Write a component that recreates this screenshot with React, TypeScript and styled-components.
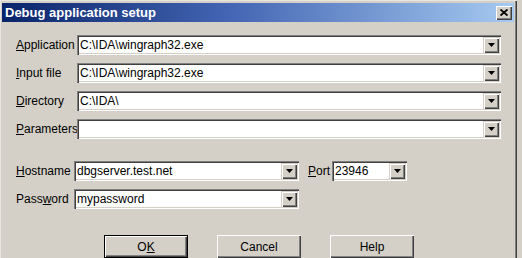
import React from "react";
import styled, { createGlobalStyle } from "styled-components";

const GlobalStyle = createGlobalStyle`
  html, body {
    margin: 0;
    padding: 0;
    background: #d4d0c8;
    overflow: hidden;
  }
  body {
    font-family: "Liberation Sans", Arial, sans-serif;
    font-size: 12px;
    color: #000;
  }
`;

type FieldRow = {
  label: React.ReactNode;
  value: string;
};

const topRows: FieldRow[] = [
  { label: <><u>A</u>pplication</>, value: "C:\\IDA\\wingraph32.exe" },
  { label: <><u>I</u>nput file</>, value: "C:\\IDA\\wingraph32.exe" },
  { label: <><u>D</u>irectory</>, value: "C:\\IDA\\" },
  { label: <><u>P</u>arameters</>, value: "" },
];

const Combo = ({ value, width }: { value: string; width?: number }) => (
  <ComboBox $width={width}>
    <ComboText>{value}</ComboText>
    <DropButton>
      <svg width="7" height="4" viewBox="0 0 7 4">
        <path d="M0 0h7L3.5 4z" fill="#000" />
      </svg>
    </DropButton>
  </ComboBox>
);

export default function App() {
  return (
    <>
      <GlobalStyle />
      <Window>
        <TitleBar>
          <Title>Debug application setup</Title>
          <CloseButton>
            <svg width="8" height="7" viewBox="0 0 8 7">
              <path d="M0.5 0.5L7.5 6.5M7.5 0.5L0.5 6.5" stroke="#000" strokeWidth="1.8" />
            </svg>
          </CloseButton>
        </TitleBar>
        <Content>
          <TopGrid>
            {topRows.map((row, i) => (
              <React.Fragment key={i}>
                <Label>{row.label}</Label>
                <Combo value={row.value} />
              </React.Fragment>
            ))}
          </TopGrid>
          <HostGrid>
            <Label><u>H</u>ostname</Label>
            <Combo value="dbgserver.test.net" width={225} />
            <PortLabel><u>P</u>ort</PortLabel>
            <Combo value="23946" width={75} />
            <Label>Pass<u>w</u>ord</Label>
            <Combo value="mypassword" width={225} />
          </HostGrid>
          <ButtonRow>
            <Button $default>O<u>K</u></Button>
            <Button>Cancel</Button>
            <Button>Help</Button>
          </ButtonRow>
        </Content>
      </Window>
    </>
  );
}

const Window = styled.div`
  width: 517px;
  height: 270px;
  box-sizing: border-box;
  padding: 3px 3px 0 2px;
  background: #d4d0c8;
  box-shadow: inset 1px 1px 0 #e8e6e1, inset -1px -1px 0 #404040,
    inset -2px -2px 0 #808080;
`;

const TitleBar = styled.div`
  height: 19px;
  display: flex;
  align-items: center;
  justify-content: space-between;
  padding: 0 2px 0 3px;
  background: linear-gradient(90deg, #0a246a 0%, #4466b4 45%, #a6caf0 100%);
`;

const Title = styled.div`
  color: #fff;
  font-family: "Liberation Sans", Arial, sans-serif;
  font-weight: bold;
  font-size: 13px;
`;

const CloseButton = styled.div`
  width: 16px;
  height: 14px;
  box-sizing: border-box;
  display: flex;
  align-items: center;
  justify-content: center;
  background: #d4d0c8;
  box-shadow: inset 1px 1px 0 #fff, inset -1px -1px 0 #404040,
    inset -2px -2px 0 #808080;
`;

const Content = styled.div`
  padding: 13px 13px 0 13px;
`;

const TopGrid = styled.div`
  display: grid;
  grid-template-columns: 62px 424px;
  row-gap: 8px;
  align-items: center;
`;

const HostGrid = styled.div`
  display: grid;
  grid-template-columns: 59px 234px 24px 75px;
  justify-content: start;
  row-gap: 8px;
  align-items: center;
  justify-items: start;
  margin-top: 22px;
`;

const Label = styled.div`
  padding-left: 1px;
  white-space: nowrap;
  line-height: 14px;
`;

const PortLabel = styled(Label)`
  padding-left: 0;
`;

const ComboBox = styled.div<{ $width?: number }>`
  width: ${(p) => (p.$width ? `${p.$width}px` : "424px")};
  height: 20px;
  box-sizing: border-box;
  display: flex;
  align-items: stretch;
  background: #fff;
  padding: 2px;
  box-shadow: inset 1px 1px 0 #808080, inset 2px 2px 0 #404040,
    inset -1px -1px 0 #fff, inset -2px -2px 0 #d4d0c8;
`;

const ComboText = styled.div`
  flex: 1;
  padding-left: 1px;
  line-height: 16px;
  white-space: nowrap;
  overflow: hidden;
`;

const DropButton = styled.div`
  width: 16px;
  box-sizing: border-box;
  display: flex;
  align-items: center;
  justify-content: center;
  background: #d4d0c8;
  box-shadow: inset 1px 1px 0 #d4d0c8, inset 2px 2px 0 #fff,
    inset -1px -1px 0 #404040, inset -2px -2px 0 #808080;
`;

const ButtonRow = styled.div`
  display: flex;
  gap: 29px;
  padding-left: 89px;
  margin-top: 26px;
`;

const Button = styled.div<{ $default?: boolean }>`
  width: 84px;
  height: 23px;
  box-sizing: border-box;
  display: flex;
  align-items: center;
  justify-content: center;
  background: #d4d0c8;
  box-shadow: ${(p) =>
    p.$default
      ? "inset 0 0 0 1px #000, inset 2px 2px 0 #fff, inset -2px -2px 0 #404040, inset -3px -3px 0 #808080"
      : "inset 1px 1px 0 #fff, inset -1px -1px 0 #404040, inset -2px -2px 0 #808080"};
`;
